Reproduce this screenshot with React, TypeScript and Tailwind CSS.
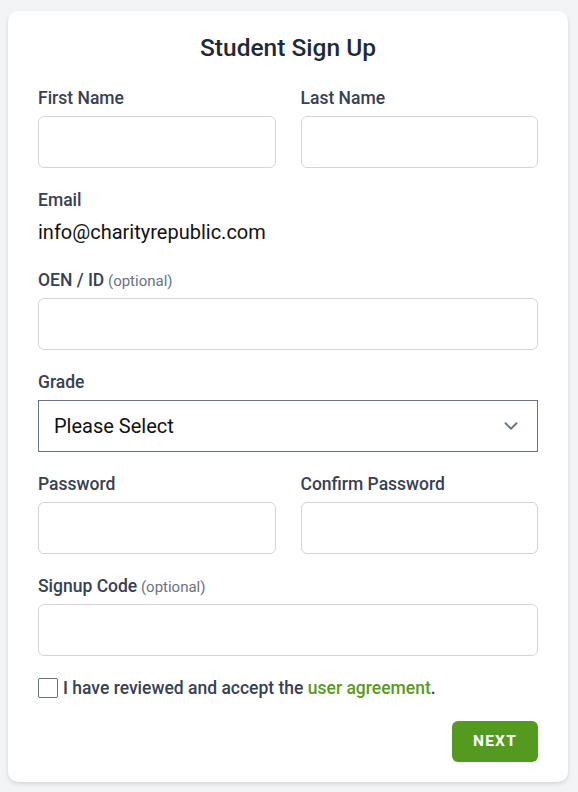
import React from "react";

function Label({ children, optional }: { children: React.ReactNode; optional?: boolean }) {
  return (
    <div className="h-6 text-[17.5px] leading-6 font-medium text-[#374151] whitespace-nowrap">
      {children}
      {optional && <span className="text-[15px] font-normal text-[#6b7280]"> (optional)</span>}
    </div>
  );
}

function Input() {
  return <div className="mt-[6px] h-[52px] rounded-md border border-[#d1d5db] bg-white" />;
}

export default function App() {
  return (
    <div className="min-h-[792px] bg-[#f3f4f6] pt-[11px] pl-2" style={{ fontFamily: "Roboto, 'Noto Sans', sans-serif" }}>
      <div className="w-[560px] rounded-[10px] bg-white px-[30px] pt-[21px] pb-[20px] shadow-[0_2px_4px_rgba(0,0,0,0.12)]">
        <h1 className="h-8 text-center text-[24.5px] leading-8 font-medium text-[#1f2937]">Student Sign Up</h1>

        <div className="mt-[22px] grid grid-cols-2 gap-x-[25px]">
          <div>
            <Label>First Name</Label>
            <Input />
          </div>
          <div>
            <Label>Last Name</Label>
            <Input />
          </div>
        </div>

        <div className="mt-[20px]">
          <Label>Email</Label>
          <div className="mt-[7px] h-[27px] text-[20px] leading-[27px] text-[#111111]">info@charityrepublic.com</div>
        </div>

        <div className="mt-[22px]">
          <Label optional>OEN / ID</Label>
          <Input />
        </div>

        <div className="mt-[20px]">
          <Label>Grade</Label>
          <div className="mt-[6px] flex h-[52px] items-center justify-between border border-[#6b7280] bg-white pl-[15px] pr-[15px]">
            <span className="text-[20px] text-[#111111]">Please Select</span>
            <svg width="22" height="22" viewBox="0 0 24 24" fill="none" stroke="#6b7280" strokeWidth="2" strokeLinecap="round" strokeLinejoin="round">
              <path d="M6 9l6 6 6-6" />
            </svg>
          </div>
        </div>

        <div className="mt-[20px] grid grid-cols-2 gap-x-[25px]">
          <div>
            <Label>Password</Label>
            <Input />
          </div>
          <div>
            <Label>Confirm Password</Label>
            <Input />
          </div>
        </div>

        <div className="mt-[20px]">
          <Label optional>Signup Code</Label>
          <Input />
        </div>

        <div className="mt-[20px] flex h-6 items-center gap-[5px]">
          <div className="h-[20px] w-[20px] shrink-0 rounded-[2px] border border-[#6b7280] bg-white" />
          <span className="text-[17.5px] leading-6 font-medium text-[#374151] whitespace-nowrap">
            I have reviewed and accept the <span className="text-[#5a9a22]">user agreement</span>.
          </span>
        </div>

        <div className="mt-[21px] flex justify-end">
          <button className="h-[41px] w-[86px] rounded-md bg-[#559a20] text-[15.5px] font-bold tracking-[0.08em] text-white">
            NEXT
          </button>
        </div>
      </div>
    </div>
  );
}
